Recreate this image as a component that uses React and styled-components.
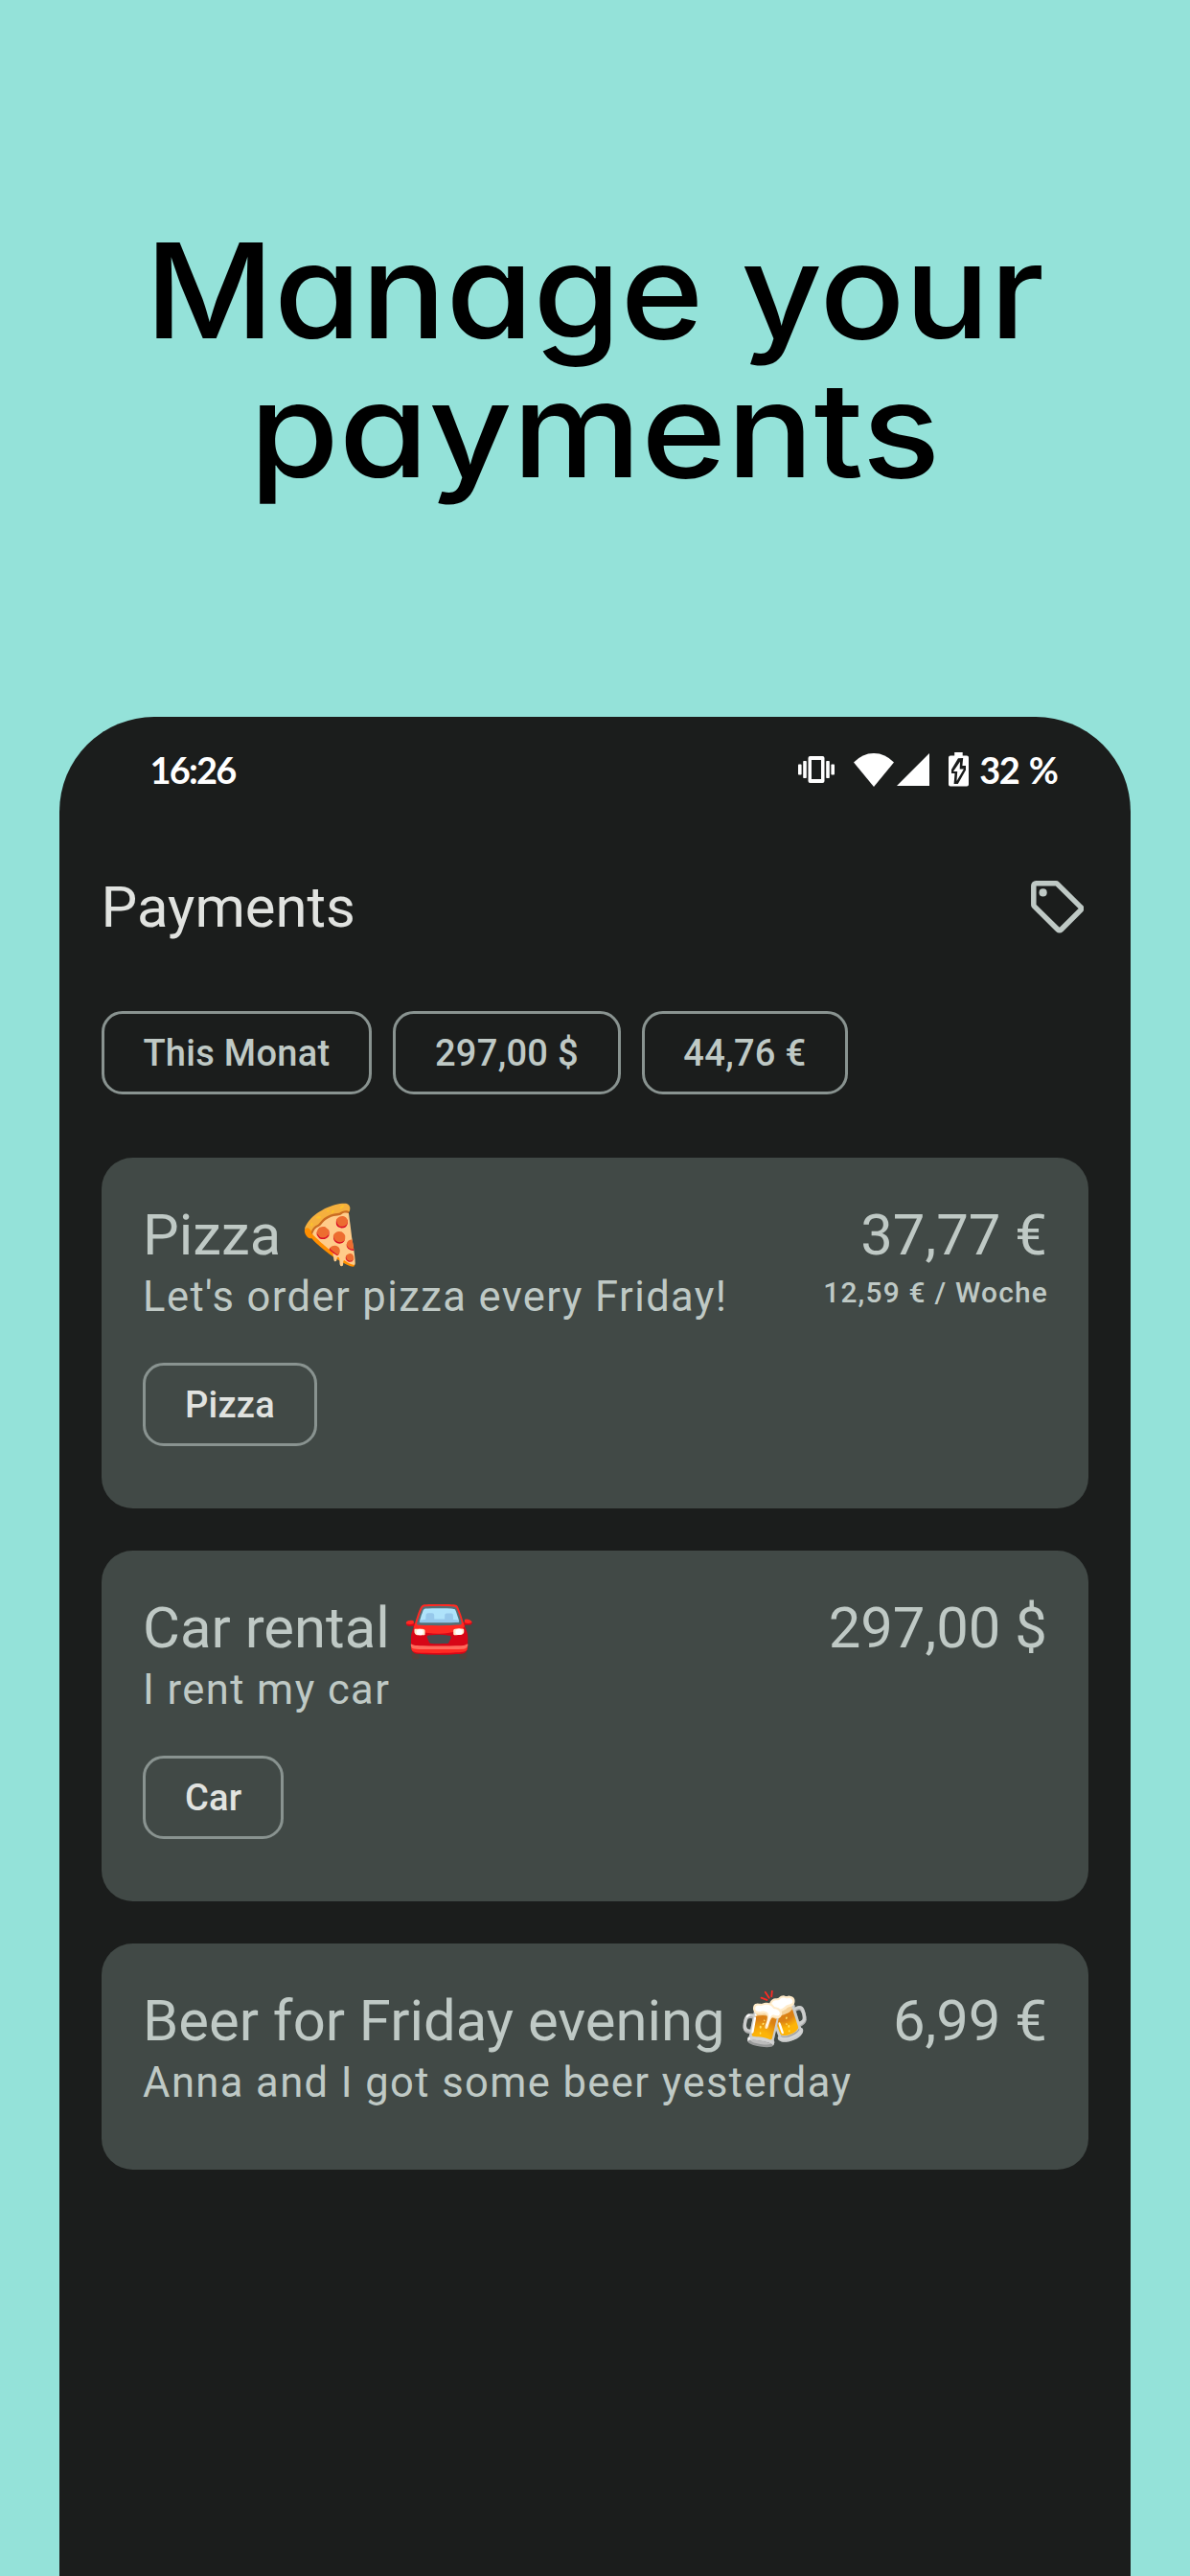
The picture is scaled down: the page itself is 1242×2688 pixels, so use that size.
import React from "react";
import styled, { createGlobalStyle } from "styled-components";

const GlobalStyle = createGlobalStyle`
  * { box-sizing: border-box; }
  body { margin: 0; background: #94e2d9; }
`;

const Page = styled.main`
  width: 1242px;
  height: 2688px;
  overflow: hidden;
  display: flex;
  flex-direction: column;
  align-items: center;
  background: #94e2d9;
  font-family: Roboto, "Noto Color Emoji", sans-serif;
`;

const Headline = styled.h1`
  height: 747.6px;
  flex: none;
  margin: 0;
  padding-top: 230px;
  color: #000;
  font-family: Inter, sans-serif;
  font-size: 138px;
  font-weight: 500;
  line-height: 145px;
  font-feature-settings: "cv11" 1;
  text-align: center;
`;

const HeadlineLine = styled.span`
  display: block;
  transform: scaleX(${(p) => p.$stretch});
`;

const Phone = styled.section`
  width: 1118px;
  flex: 1;
  padding: 0 43.6px;
  border-radius: 99px 99px 0 0;
  background: #1b1d1c;
`;

const StatusBar = styled.div`
  display: flex;
  align-items: center;
  height: 111px;
  padding: 0 33px 0 51px;
  color: #fff;
  font-family: Lato, sans-serif;
  font-size: 38px;
  font-weight: 700;
`;

const Clock = styled.span`
  margin-right: auto;
  letter-spacing: -1.8px;
`;

const StatusIcon = styled.svg`
  display: block;
  flex: none;
  fill: #fff;
  margin-right: ${(p) => p.$gap}px;
`;

const Battery = styled.span`
  letter-spacing: -1.6px;
  word-spacing: 3px;
`;

const AppBar = styled.header`
  display: flex;
  align-items: center;
  justify-content: space-between;
  height: 176px;
  padding-right: 5px;
`;

const Title = styled.h2`
  margin: 0;
  color: #e1e3e0;
  font-size: 59.8px;
  font-weight: 400;
  line-height: 76px;
`;

const ChipRow = styled.div`
  display: flex;
  gap: 21.8px;
  margin-top: ${(p) => p.$top}px;
`;

const Chip = styled.span`
  height: 87.1px;
  padding: 0 40.8px;
  border: 3px solid #899390;
  border-radius: 21.8px;
  color: ${(p) => p.$color};
  font-size: 38.1px;
  font-weight: 500;
  letter-spacing: 0.27px;
  line-height: 82px;
  white-space: nowrap;
`;

const CardList = styled.div`
  display: flex;
  flex-direction: column;
  gap: 43.5px;
  margin-top: 65.3px;
`;

const Card = styled.article`
  padding: 43.5px 43.5px 65.1px;
  border-radius: 32.6px;
  background: #414946;
  color: #bfc9c5;
`;

const CardTop = styled.div`
  display: flex;
  justify-content: space-between;
`;

const Side = styled.div`
  text-align: ${(p) => p.$align};
  white-space: nowrap;
`;

const Heading = styled.div`
  height: 76.4px;
  font-size: 59.8px;
  line-height: 76.4px;
`;

const Description = styled.div`
  height: 51.4px;
  font-size: 43.5px;
  letter-spacing: 1.42px;
  line-height: 53px;
`;

const Interval = styled.div`
  margin-right: -1.2px;
  font-size: 29.9px;
  font-weight: 500;
  letter-spacing: 1.22px;
  line-height: 44px;
`;

const payments = [
  { name: "Pizza 🍕", note: "Let's order pizza every Friday!", amount: "37,77 €", interval: "12,59 € / Woche", tag: "Pizza" },
  { name: "Car rental 🚘", note: "I rent my car", amount: "297,00 $", tag: "Car" },
  { name: "Beer for Friday evening 🍻", note: "Anna and I got some beer yesterday", amount: "6,99 €" },
];

function VibrateIcon() {
  return (
    <StatusIcon width="38" height="28" viewBox="0 0 38 28" $gap={20}>
      <path fillRule="evenodd" d="M12.5 0h13a2 2 0 0 1 2 2v24a2 2 0 0 1-2 2h-13a2 2 0 0 1-2-2V2a2 2 0 0 1 2-2zM14 4v20h10V4z" />
      <rect x="5.2" y="5" width="3.6" height="18" rx="0.8" />
      <rect x="29.2" y="5" width="3.6" height="18" rx="0.8" />
      <rect x="0" y="8.6" width="3.6" height="11" rx="0.8" />
      <rect x="34.4" y="8.6" width="3.6" height="11" rx="0.8" />
    </StatusIcon>
  );
}

function WifiIcon() {
  return (
    <StatusIcon width="42" height="35" viewBox="0 0 42 35" $gap={3.5}>
      <path d="M21 35 0 9.6Q9 0 21 0t21 9.6z" />
    </StatusIcon>
  );
}

function SignalIcon() {
  return (
    <StatusIcon width="34" height="34" viewBox="0 0 34 34" $gap={19.5}>
      <path d="M34 0v34H0z" />
    </StatusIcon>
  );
}

function BatteryIcon() {
  return (
    <StatusIcon width="21" height="35.5" viewBox="0 0 21 35.5" $gap={11.5}>
      <path
        fillRule="evenodd"
        d="M6.2 0h8.5v3.5H19a2 2 0 0 1 2 2v28a2 2 0 0 1-2 2H2a2 2 0 0 1-2-2v-28a2 2 0 0 1 2-2h4.2zM10 6.2 3 18v4h3.5L5.6 33h4.2L18 18.6V14h-3.6l.8-8z"
      />
      <path d="M12 9.8 5 20h4.2l-.7 10 7.4-12.6h-4.2z" />
    </StatusIcon>
  );
}

function TagIcon() {
  return (
    <svg width="55.3" height="54.6" viewBox="0 0 55.3 54.6" fill="none">
      <path
        d="M5.2 2.8H26a2 2 0 0 1 1.5.6L52 27.6a2 2 0 0 1 0 3L31.3 51.2a2 2 0 0 1-3 0L3.4 26.6a2 2 0 0 1-.6-1.5V5.2a2.4 2.4 0 0 1 2.4-2.4z"
        stroke="#bfc9c5"
        strokeWidth="5.5"
      />
      <circle cx="12.6" cy="12.4" r="4.1" fill="#bfc9c5" />
    </svg>
  );
}

export default function App() {
  return (
    <Page>
      <GlobalStyle />
      <Headline>
        <HeadlineLine $stretch={1.067}>Manage your</HeadlineLine>
        <HeadlineLine $stretch={1.098}>payments</HeadlineLine>
      </Headline>
      <Phone>
        <StatusBar>
          <Clock>16:26</Clock>
          <VibrateIcon />
          <WifiIcon />
          <SignalIcon />
          <BatteryIcon />
          <Battery>32 %</Battery>
        </StatusBar>
        <AppBar>
          <Title>Payments</Title>
          <TagIcon />
        </AppBar>
        <ChipRow $top={20.6}>
          <Chip $color="#bfc9c5">This Monat</Chip>
          <Chip $color="#bfc9c5">297,00 $</Chip>
          <Chip $color="#bfc9c5">44,76 €</Chip>
        </ChipRow>
        <CardList>
          {payments.map((p) => (
            <Card key={p.name}>
              <CardTop>
                <Side $align="left">
                  <Heading>{p.name}</Heading>
                  <Description>{p.note}</Description>
                </Side>
                <Side $align="right">
                  <Heading>{p.amount}</Heading>
                  {p.interval && <Interval>{p.interval}</Interval>}
                </Side>
              </CardTop>
              {p.tag && (
                <ChipRow $top={43}>
                  <Chip $color="#e1e3e0">{p.tag}</Chip>
                </ChipRow>
              )}
            </Card>
          ))}
        </CardList>
      </Phone>
    </Page>
  );
}
